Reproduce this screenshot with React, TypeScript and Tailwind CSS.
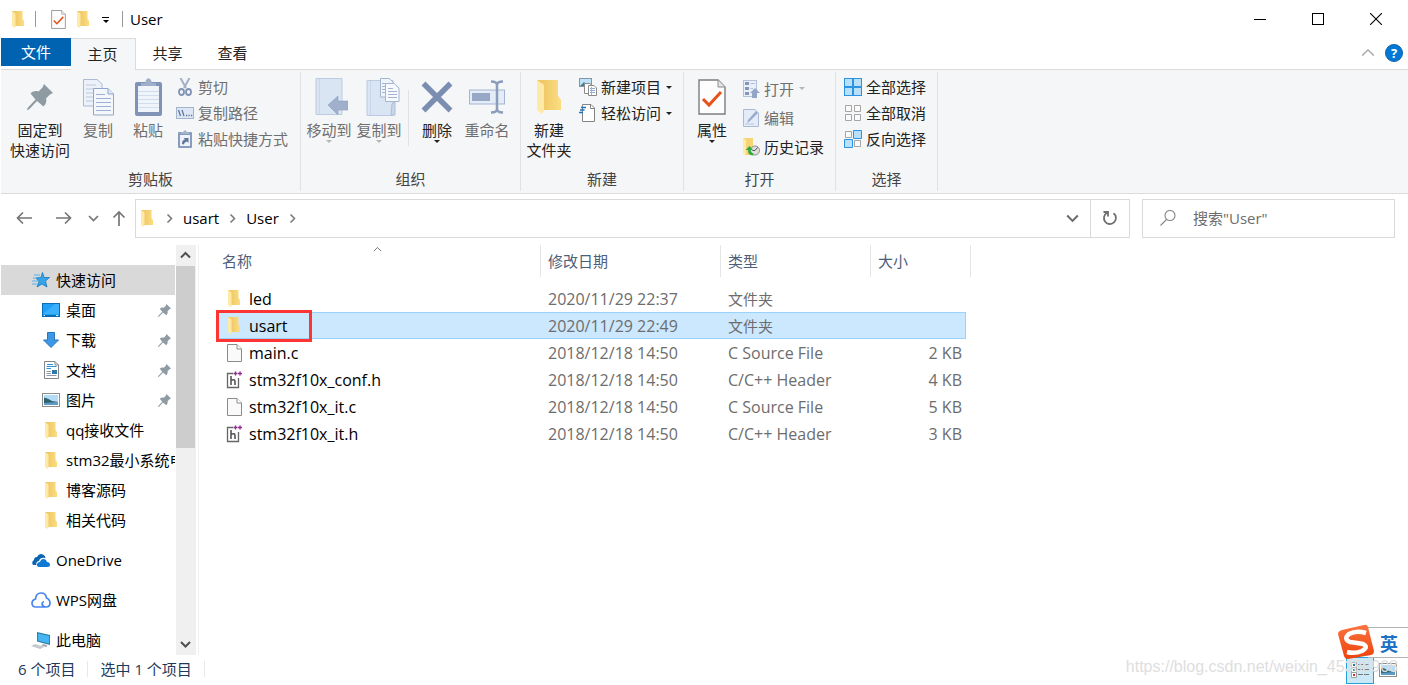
import { useState } from 'react';
import type { ReactNode } from 'react';

/* ---------- icons ---------- */

function FolderIcon({ className = 'w-3 h-[17px]' }: { className?: string }) {
  return (
    <svg viewBox="0 0 24 34" preserveAspectRatio="none" className={className}>
      <defs>
        <linearGradient id="folder-back" x1="0" x2="1" y1="0" y2="0">
          <stop offset="0.2" stopColor="#efc766" />
          <stop offset="1" stopColor="#fbdd80" />
        </linearGradient>
      </defs>
      <path d="M0 0H21V16L24 20V30H6L0 24Z" fill="url(#folder-back)" />
      <path d="M0 0L7 5V31L5 34L0 30Z" fill="#ffe9a6" />
    </svg>
  );
}

function CheckDocIcon({ className }: { className: string }) {
  return (
    <svg viewBox="0 0 28 36" className={className}>
      <path d="M1 1H20L27 8V35H1Z" fill="#fdfdfd" stroke="#7d7d7d" strokeWidth="1.4" />
      <path d="M20 1V8H27" fill="#e6e6e6" stroke="#8b8b8b" />
      <path d="M5 20L11 26L23 13" fill="none" stroke="#e8511a" strokeWidth="3" />
    </svg>
  );
}

function PinIcon({ className }: { className: string }) {
  return (
    <svg viewBox="0 0 26 26" className={className}>
      <path
        d="M17 0L26 9L23 10.5L19 14.5C20 17 19 20 16.5 22.500L10 17L2 25.500L0 26L.5 24L8.500 15.500L3.500 9.500C6 7 9 6.500 11.500 7.500L15.500 3.500Z"
        fill="#8f9ba3"
      />
    </svg>
  );
}

function CopyIcon() {
  return (
    <svg viewBox="0 0 31 37" className="w-[31px] h-[37px]">
      <path d="M.5 .5H14L19 5V27H.5Z" fill="#edf2fa" stroke="#a9bbd5" />
      <path d="M3 6H13M3 10H16M3 14H10M3 18H10M3 22H10" stroke="#b9c8de" />
      <path d="M10.500 9.500H25L30.500 15V36H10.500Z" fill="#f3f7fc" stroke="#91a6c6" />
      <path d="M25 9.500V15H30.500" fill="#dfe8f4" stroke="#91a6c6" />
      <path d="M13 15.500H22M13 19.500H28M13 23.500H28M13 27.500H28M13 31.500H28" stroke="#9fb1ce" />
    </svg>
  );
}

function PasteIcon() {
  return (
    <svg viewBox="0 0 27 38" className="w-[27px] h-[38px]">
      <rect x="0" y="4" width="27" height="34" rx="2" fill="#8093b6" />
      <rect x="3" y="8" width="21" height="26" fill="#eff4fb" />
      <path d="M3 13.500H24M3 17.500H24M3 21.500H24M3 25.500H24M3 29.500H24" stroke="#d3deed" />
      <path d="M6 5H10L11 2Q13.500 -1.500 16 2L17 5H21V8H6Z" fill="#a0afc9" />
    </svg>
  );
}

function ScissorsIcon() {
  return (
    <svg viewBox="0 0 14 18" className="w-[14px] h-[18px]" fill="none">
      <path d="M2.500 0L8 10M11.500 0L6 10" stroke="#a2b0c8" strokeWidth="2" />
      <ellipse cx="3.500" cy="14" rx="2.500" ry="3" stroke="#8093b6" strokeWidth="1.800" />
      <ellipse cx="10.500" cy="14" rx="2.500" ry="3" stroke="#8093b6" strokeWidth="1.800" />
    </svg>
  );
}

function PathIcon() {
  return (
    <svg viewBox="0 0 18 12" className="w-[18px] h-3">
      <rect x=".5" y=".5" width="17" height="11" fill="#dde6f4" stroke="#a3b4ce" />
      <path d="M2.500 3L4.500 9M6 3L8 9" stroke="#5c6f96" strokeWidth="1.200" />
      <path d="M10 8.500H11.200M12.500 8.500H13.700M15 8.500H16.200" stroke="#5c6f96" strokeWidth="1.500" />
    </svg>
  );
}

function PasteShortcutIcon() {
  return (
    <svg viewBox="0 0 14 18" className="w-[14px] h-[18px]">
      <rect x="0" y="2" width="14" height="16" rx="1" fill="#8a9cbd" />
      <rect x="2" y="5" width="10" height="11" fill="#eef3fb" />
      <path d="M3 2H5L7 0L9 2H11V4H3Z" fill="#a5b3cc" />
      <path d="M4 14C4 11 5 10 7 9.500L5.500 8H10.500V13L9 11.500C7 12 6 13 6 14.500Z" fill="#62769d" />
    </svg>
  );
}

function MoveToIcon() {
  return (
    <svg viewBox="-5 0 38 38" className="w-[38px] h-[38px]">
      <path d="M1 .5H27V36.500H1Z" fill="#dae5f4" stroke="#bccbe2" />
      <path d="M4.500 1V36" stroke="#c9d6e9" />
      <path d="M13 27L23 18V23H33V32H23V37Z" fill="#a0b0cb" stroke="#8fa1c0" strokeWidth=".6" />
    </svg>
  );
}

function CopyToIcon() {
  return (
    <svg viewBox="-7 0 41 38" className="w-[41px] h-[38px]">
      <path d="M1 2.500H27V37.500H1Z" fill="#dae5f4" stroke="#bccbe2" />
      <path d="M4.500 3V37" stroke="#c9d6e9" />
      <path d="M26 26L29 24V37H25Z" fill="#c9d7eb" stroke="#adbdd6" />
      <path d="M14.500 .5H23L27 4V19H14.500Z" fill="#f0f5fb" stroke="#a4b5d0" />
      <path d="M19.500 5.500H28L33 10V23.500H19.500Z" fill="#f6f9fd" stroke="#a4b5d0" />
      <path d="M16 5.500H19M16 8.500H19M16 11.500H19M16 14.500H19M22 10.500H27M22 13.500H31M22 16.500H31M22 19.500H31" stroke="#a4b5d0" />
    </svg>
  );
}

function DeleteIcon() {
  return (
    <svg viewBox="0 0 32 32" className="w-8 h-8">
      <path d="M2.500 2.500L29.500 29.500M29.500 2.500L2.500 29.500" stroke="#7b8db0" strokeWidth="5.500" />
    </svg>
  );
}

function RenameIcon() {
  return (
    <svg viewBox="0 0 36 34" className="w-9 h-[34px]">
      <rect x=".5" y="10" width="35" height="14" fill="#e4ecf8" stroke="#a3b5d2" />
      <rect x="3" y="13" width="18" height="8" fill="#97a8c7" />
      <path d="M22 1.500Q28 1.500 28 5Q28 1.500 34 1.500M28 4V30M22 32.500Q28 32.500 28 29Q28 32.500 34 32.500" fill="none" stroke="#8b9dbd" strokeWidth="2.500" />
    </svg>
  );
}

function NewItemIcon() {
  return (
    <svg viewBox="0 0 18 18" className="w-[18px] h-[18px]">
      <rect x=".5" y=".5" width="12" height="8" fill="#bfe2f7" stroke="#7f98a8" />
      <path d="M1 8L5 4L8 7L10 5L12 8Z" fill="#3f8097" />
      <path d="M5.500 5.500H11L13 8V15.500H5.500Z" fill="#fff" stroke="#8b8b8b" />
      <path d="M9.500 7.500H15L17.500 10V17.500H9.500Z" fill="#fff" stroke="#8b8b8b" />
      <path d="M11 10.500H16M11 12.500H16M11 14.500H16" stroke="#91a9d0" />
      <path d="M12.500 9V17" stroke="#e39a9a" />
    </svg>
  );
}

function EasyAccessIcon() {
  return (
    <svg viewBox="0 0 18 18" className="w-[18px] h-[18px]">
      <path d="M3.500 .5H12L15.500 4V17.500H3.500Z" fill="#fff" stroke="#848484" />
      <path d="M11.500 .5V4.500H15.500" fill="none" stroke="#848484" />
      <path d="M2 3.500H7M1 6H5.500M0 8.500H4" stroke="#2273b8" strokeWidth="1.400" />
    </svg>
  );
}

function OpenIcon() {
  return (
    <svg viewBox="0 0 17 18" className="w-[17px] h-[18px]">
      <rect x=".5" y=".5" width="13" height="16" fill="#eaf0f9" stroke="#b3c2da" />
      <path d="M2 2H6V5H2ZM2 7H6V10H2ZM2 12H6V15H2Z" fill="#8395b8" />
      <path d="M7.500 3.500H12M7.500 8.500H10" stroke="#b3c2da" />
      <path d="M12 8L17 13H14V18H9V13H7Z" fill="#94a6c6" />
    </svg>
  );
}

function EditIcon() {
  return (
    <svg viewBox="0 0 16 18" className="w-4 h-[18px]">
      <path d="M.5 .5H12L15.500 4V17.500H.5Z" fill="#e3ecf8" stroke="#a9bad4" />
      <path d="M4 14L5 11L13 2L15 4L7 12Z" fill="#9bacca" />
      <path d="M2 15H11" stroke="#b8c8de" />
    </svg>
  );
}

function HistoryIcon() {
  return (
    <svg viewBox="0 0 18 18" className="w-[18px] h-[18px]">
      <path d="M1 0H11V17H4L1 15Z" fill="#f7d474" />
      <path d="M1 0L4 2V18L1 16Z" fill="#ffeaaa" />
      <circle cx="13" cy="12.500" r="4.500" fill="#dedede" stroke="#8d8d8d" />
      <path d="M13 12.500L15.500 9.500M13 12.500H10.500" stroke="#555" />
      <path d="M11 17.500Q5.500 17 6 12H3.500L7.500 8L11 12H8.500Q8.500 14.500 11.500 15.500Z" fill="#2eaa3f" />
    </svg>
  );
}

function SelectIcon({ cells }: { cells: 'all' | 'none' | 'invert' }) {
  if (cells === 'all') {
    return (
      <svg viewBox="0 0 18 18" className="w-[18px] h-[18px]">
        <rect width="18" height="18" fill="#2c93e3" />
        <path d="M1 1H8V8H1ZM10 1H17V8H10ZM1 10H8V17H1ZM10 10H17V17H10Z" fill="#b9e0fb" />
      </svg>
    );
  }
  return (
    <svg viewBox="0 0 18 18" className="w-[18px] h-[18px]">
      <path d="M1.500 1.500H7.500V7.500H1.500ZM10.500 1.500H16.500V7.500H10.500ZM1.500 10.500H7.500V16.500H1.500ZM10.500 10.500H16.500V16.500H10.500Z" fill="#fafafa" stroke="#a5a5a5" />
      {cells === 'invert' && (
        <path d="M9.500 .5H17.500V8.500H9.500ZM.5 9.500H8.500V17.500H.5Z" fill="#b9e0fb" stroke="#2c93e3" />
      )}
    </svg>
  );
}

type Direction = 'up' | 'down' | 'right';

const CHEVRONS: Record<Direction, string> = {
  up: 'M1 7.500L5.500 3L10 7.500',
  down: 'M1 3L5.500 7.500L10 3',
  right: 'M3.500 1.500L7.500 5.500L3.500 9.500',
};

function Chevron({ dir, className = 'w-[11px] h-[11px] text-[#767676]', width = 2 }: { dir: Direction; className?: string; width?: number }) {
  return (
    <svg viewBox="0 0 11 11" className={className} fill="none" stroke="currentColor" strokeWidth={width}>
      <path d={CHEVRONS[dir]} />
    </svg>
  );
}

function Caret({ className = 'text-[#222]' }: { className?: string }) {
  return (
    <svg viewBox="0 0 6 3" className={`w-1.5 h-[3px] ${className}`}>
      <path d="M0 0H6L3 3Z" fill="currentColor" />
    </svg>
  );
}

function ArrowIcon({ kind }: { kind: 'back' | 'forward' | 'up' }) {
  const paths = {
    back: 'M16 8H1.500M7 2.500L1.500 8L7 13.500',
    forward: 'M0 8H14.500M9 2.500L14.500 8L9 13.500',
    up: 'M8 16V2M2.500 7.500L8 2L13.500 7.500',
  };
  return (
    <svg viewBox="0 0 16 16" className="w-4 h-4" fill="none" stroke="#767676" strokeWidth="1.700">
      <path d={paths[kind]} />
    </svg>
  );
}

function StarIcon() {
  return (
    <svg viewBox="0 0 18 16" className="w-[18px] h-4">
      <path d="M10.500 .5L12 5.500H17.500L13.500 9L15 15L10 12L5 15L7 9.500L4 6L9 5.500Z" fill="#35a5e8" stroke="#1777bd" strokeWidth=".8" />
      <path d="M2 3H8M1 6H5M0 9H6M0 12H5" stroke="#56b0ea" />
    </svg>
  );
}

function DesktopIcon() {
  return (
    <svg viewBox="0 0 18 14" className="w-[18px] h-[14px]">
      <rect x=".5" y=".5" width="17" height="13" fill="#1fa0f7" stroke="#0c6db4" />
      <path d="M1 11L13 1H17V11Z" fill="#3bb0fb" />
      <path d="M2 12.500H16" stroke="#0c6db4" />
      <path d="M2 12.500H3M14 12.500H16" stroke="#d6eefd" />
    </svg>
  );
}

function DownloadIcon() {
  return (
    <svg viewBox="0 0 16 16" className="w-4 h-4">
      <path d="M4.500 .5H11.500V8H15.500L8 15.500L.5 8H4.500Z" fill="#3c98e4" stroke="#2877be" />
    </svg>
  );
}

function DocumentIcon() {
  return (
    <svg viewBox="0 0 15 18" className="w-[15px] h-[18px]">
      <path d="M.5 .5H11L14.500 4V17.500H.5Z" fill="#fff" stroke="#858585" />
      <path d="M3 3.500H9M2.500 5.500H12.500M2.500 7.500H7" stroke="#2b93d8" />
      <path d="M2.500 10.500H7M2.500 12.500H7M2.500 14.500H12.500" stroke="#8f9ba8" />
      <rect x="8" y="9" width="5" height="4" fill="#2f79a8" />
      <path d="M11 .5V4H14.500" fill="none" stroke="#858585" />
    </svg>
  );
}

function PictureIcon() {
  return (
    <svg viewBox="0 0 18 14" className="w-[18px] h-[14px]">
      <rect x=".5" y=".5" width="17" height="13" fill="#fff" stroke="#8d8d8d" />
      <rect x="2" y="2" width="14" height="10" fill="#b3dcf8" />
      <path d="M2 4.500Q6 5 10 8L16 9V12H2Z" fill="#2f6270" />
      <path d="M2 10L16 9V12H2Z" fill="#5f9bc8" />
    </svg>
  );
}

function OneDriveIcon() {
  return (
    <svg viewBox="0 0 18 13" className="w-[18px] h-[13px]">
      <path d="M1 11Q-1 8 2 6Q2 3 5 3Q7 -1 11 .5Q13.500 1.500 13.500 4Q8 3 7 7Q3.500 7.500 4.500 11Z" fill="#0a64b4" />
      <path d="M7 13Q4.500 12.500 5 10Q5.500 8 8 8Q9 4.500 12 5Q14.500 5.500 15 8Q18 8.500 18 10.500Q18 13 15.500 13Z" fill="#0f7ad6" />
    </svg>
  );
}

function WpsCloudIcon() {
  return (
    <svg viewBox="0 0 20 16" className="w-5 h-4" fill="none" stroke="#4a86f0" strokeWidth="1.700">
      <path d="M13 15H5Q1 15 1 11Q1 8 4.500 7Q5 1 10 1Q15 1 15.500 6Q19 7.500 19 11Q19 15 15 15Q11.500 15 11 12Q11 10 13 9.500" />
    </svg>
  );
}

function ComputerIcon() {
  return (
    <svg viewBox="0 0 20 17" className="w-5 h-[17px]">
      <path d="M6 0L19 3V13L6 9.500Z" fill="#2d7fae" />
      <path d="M7 1.500L18 4V11.500L7 8.500Z" fill="#46b6f2" />
      <path d="M12 12L16 13V15L10 14Z" fill="#a5adb3" />
      <path d="M0 14L4 12L13 15L9 17Z" fill="#c3c9cd" />
    </svg>
  );
}

function CFileIcon() {
  return (
    <svg viewBox="0 0 15 18" className="w-[15px] h-[18px]">
      <path d="M.5 .5H10L14.500 5V17.500H.5Z" fill="#fafafa" stroke="#8c8c8c" />
      <path d="M10 .5V5H14.500" fill="#fff" stroke="#8c8c8c" />
    </svg>
  );
}

function HeaderFileIcon() {
  return (
    <svg viewBox="0 0 16 18" className="w-4 h-[18px]" fill="none">
      <path d="M7 2.500H1.500V16.500H12.500V7" stroke="#666" strokeWidth="1.300" />
      <path d="M5 5V14M5 9.500Q9 7.500 9 10.500V14" stroke="#555" strokeWidth="1.600" />
      <path d="M7.500 2.500H11.500M9.500 .5V4.500M12 2.500H16M14 .5V4.500" stroke="#92278f" strokeWidth="1.300" />
    </svg>
  );
}

/* ---------- ribbon ---------- */

interface RibbonButtonProps {
  icon: ReactNode;
  label: string;
  disabled?: boolean;
  dropdown?: boolean;
}

function BigButton({ icon, label, disabled, dropdown, className = 'w-[50px]' }: RibbonButtonProps & { className?: string }) {
  return (
    <button
      type="button"
      disabled={disabled}
      className={`flex shrink-0 flex-col items-center text-[#222] disabled:text-[#6f6f6f] ${className}`}
    >
      <span className="flex h-[46px] items-center">{icon}</span>
      <span className="whitespace-pre text-center leading-5">{label}</span>
      {dropdown && <Caret className={disabled ? 'text-[#b5b5b5]' : 'text-[#222]'} />}
    </button>
  );
}

function SmallButton({ icon, label, disabled, dropdown, className = 'h-[26px]' }: RibbonButtonProps & { className?: string }) {
  return (
    <button
      type="button"
      disabled={disabled}
      className={`flex items-center whitespace-nowrap text-[#222] disabled:text-[#6f6f6f] ${className}`}
    >
      <span className="mr-1 flex w-[18px] justify-center">{icon}</span>
      {label}
      {dropdown && (
        <span className="ml-[5px]">
          <Caret className={disabled ? 'text-[#b5b5b5]' : 'text-[#222]'} />
        </span>
      )}
    </button>
  );
}

function RibbonGroup({ title, className, children }: { title: string; className: string; children: ReactNode }) {
  return (
    <section aria-label={title} className={`my-0.5 flex shrink-0 flex-col border-r border-[#e0e2e4] pt-0.5 ${className}`}>
      <div className="flex h-[94px] items-start pl-[3px]">{children}</div>
      <div className="text-center leading-6 text-[#444]">{title}</div>
    </section>
  );
}

function Ribbon() {
  return (
    <div className="flex h-[124px] border-b border-[#dadbdc] bg-[#f5f6f7]">
      <RibbonGroup title="剪贴板" className="w-[300px]">
        <BigButton icon={<PinIcon className="w-[26px] h-[26px]" />} label={'固定到\n快速访问'} className="w-[72px]" />
        <BigButton icon={<CopyIcon />} label="复制" disabled className="w-[44px]" />
        <BigButton icon={<PasteIcon />} label="粘贴" disabled className="w-[56px]" />
        <div className="flex flex-col">
          <SmallButton icon={<ScissorsIcon />} label="剪切" disabled />
          <SmallButton icon={<PathIcon />} label="复制路径" disabled />
          <SmallButton icon={<PasteShortcutIcon />} label="粘贴快捷方式" disabled />
        </div>
      </RibbonGroup>

      <RibbonGroup title="组织" className="w-[220px]">
        <BigButton icon={<MoveToIcon />} label="移动到" disabled dropdown />
        <BigButton icon={<CopyToIcon />} label="复制到" disabled dropdown />
        <div className="ml-1 mr-[3px] mt-4 h-14 border-r border-[#e0e2e4]" />
        <BigButton icon={<DeleteIcon />} label="删除" dropdown />
        <BigButton icon={<RenameIcon />} label="重命名" disabled />
      </RibbonGroup>

      <RibbonGroup title="新建" className="w-[163px]">
        <BigButton icon={<FolderIcon className="w-6 h-[34px]" />} label={'新建\n文件夹'} />
        <div className="ml-[5px] flex flex-col">
          <SmallButton icon={<NewItemIcon />} label="新建项目" dropdown />
          <SmallButton icon={<EasyAccessIcon />} label="轻松访问" dropdown />
        </div>
      </RibbonGroup>

      <RibbonGroup title="打开" className="w-[152px]">
        <BigButton icon={<CheckDocIcon className="w-7 h-9" />} label="属性" dropdown />
        <div className="ml-[5px] flex flex-col">
          <SmallButton icon={<OpenIcon />} label="打开" disabled dropdown className="h-[29px]" />
          <SmallButton icon={<EditIcon />} label="编辑" disabled className="h-[29px]" />
          <SmallButton icon={<HistoryIcon />} label="历史记录" className="h-[29px]" />
        </div>
      </RibbonGroup>

      <RibbonGroup title="选择" className="w-[102px]">
        <div className="ml-[5px] flex flex-col">
          <SmallButton icon={<SelectIcon cells="all" />} label="全部选择" />
          <SmallButton icon={<SelectIcon cells="none" />} label="全部取消" />
          <SmallButton icon={<SelectIcon cells="invert" />} label="反向选择" />
        </div>
      </RibbonGroup>
    </div>
  );
}

/* ---------- window chrome ---------- */

function TitleBar() {
  return (
    <header className="flex h-[38px] items-center">
      <div className="flex flex-1 items-center pl-[11px]">
        <FolderIcon />
        <span className="ml-[11px] h-4 border-l border-[#999]" />
        <button type="button" aria-label="属性" className="ml-[15px]">
          <CheckDocIcon className="w-[15px] h-[19px]" />
        </button>
        <button type="button" aria-label="新建文件夹" className="ml-[11px]">
          <FolderIcon />
        </button>
        <button type="button" aria-label="自定义快速访问工具栏" className="ml-[13px] flex flex-col items-center gap-0.5 pt-0.5">
          <span className="w-[7px] border-t border-black" />
          <Caret className="text-black" />
        </button>
        <span className="ml-[13px] mr-[7px] h-4 border-l border-[#999]" />
        <h1 className="text-black">User</h1>
      </div>
      <div className="flex pr-[3px]">
        <button type="button" aria-label="最小化" className="flex h-[38px] w-[58px] items-center justify-center">
          <span className="w-3 border-t border-black" />
        </button>
        <button type="button" aria-label="最大化" className="flex h-[38px] w-[58px] items-center justify-center">
          <span className="h-3 w-3 border border-black" />
        </button>
        <button type="button" aria-label="关闭" className="flex h-[38px] w-[58px] items-center justify-center">
          <svg viewBox="0 0 12 12" className="w-3 h-3" stroke="#000" strokeWidth="1.100">
            <path d="M0 0L12 12M12 0L0 12" />
          </svg>
        </button>
      </div>
    </header>
  );
}

function TabBar() {
  const tabs = ['主页', '共享', '查看'];
  const [active, setActive] = useState('主页');

  return (
    <nav className="flex h-8 items-start border-b border-[#dadbdc]">
      <button type="button" className="h-7 w-[70px] bg-[#0063b1] text-white">
        文件
      </button>
      {tabs.map((tab) => (
        <button
          key={tab}
          type="button"
          onClick={() => setActive(tab)}
          className={`w-[65px] border-r border-t pr-px pb-0.5 text-[#222] ${
            tab === active ? 'h-8 border-[#dadbdc] bg-[#f5f6f7]' : 'h-[31px] border-transparent'
          }`}
        >
          {tab}
        </button>
      ))}
      <div className="ml-auto flex h-[30px] items-center gap-2.5 pr-[5px]">
        <button type="button" aria-label="最小化功能区">
          <Chevron dir="up" className="w-[14px] h-[14px] text-[#a0a0a0]" width={1} />
        </button>
        <button
          type="button"
          aria-label="帮助"
          className="h-[18px] w-[18px] rounded-full border border-[#1561a5] bg-[#0078d7] text-[13px] font-bold leading-4 text-white"
        >
          ?
        </button>
      </div>
    </nav>
  );
}

function AddressRow() {
  return (
    <div className="flex h-[51px] items-center pr-[13px] pb-[3px]">
      <div className="flex w-[134px] shrink-0 items-center pl-[15px]">
        <button type="button" aria-label="后退"><ArrowIcon kind="back" /></button>
        <button type="button" aria-label="前进" className="ml-6"><ArrowIcon kind="forward" /></button>
        <button type="button" aria-label="最近浏览的位置" className="ml-4">
          <Chevron dir="down" className="w-[11px] h-[11px] text-[#767676]" width={1.7} />
        </button>
        <button type="button" aria-label="上移" className="ml-3"><ArrowIcon kind="up" /></button>
      </div>
      <div className="flex h-[39px] flex-1 border border-[#d9d9d9]">
        <div className="flex flex-1 items-center pl-[5px] text-black">
          <FolderIcon />
          <span className="ml-[11px]"><Chevron dir="right" width={1.5} /></span>
          <a href="#usart" className="ml-2">usart</a>
          <span className="ml-2"><Chevron dir="right" width={1.5} /></span>
          <a href="#User" className="ml-2">User</a>
          <span className="ml-2"><Chevron dir="right" width={1.5} /></span>
        </div>
        <button type="button" aria-label="以前的位置" className="flex w-9 items-center justify-center">
          <Chevron dir="down" className="w-[13px] h-[13px] text-[#6a6a6a]" width={1.7} />
        </button>
        <button type="button" aria-label="刷新" className="flex w-[39px] items-center justify-center border-l border-[#d9d9d9]">
          <svg viewBox="0 0 16 16" className="w-4 h-4" fill="none" stroke="#6f6f6f" strokeWidth="1.800">
            <path d="M11.500 3.200A6 6 0 1 1 5 2.800M1.500 2H6V6.500" />
          </svg>
        </button>
      </div>
      <label className="ml-3 flex h-[39px] w-[253px] items-center border border-[#d9d9d9] pl-[17px]">
        <svg viewBox="0 0 16 16" className="w-4 h-4 shrink-0" fill="none" stroke="#858585" strokeWidth="1.100">
          <circle cx="10" cy="5.500" r="5" />
          <path d="M6.500 9.500L.5 15.500" />
        </svg>
        <input
          type="text"
          aria-label="搜索"
          placeholder={'搜索"User"'}
          className="ml-[17px] w-full min-w-0 outline-none placeholder:text-[#6d6d6d]"
        />
      </label>
    </div>
  );
}

/* ---------- navigation pane ---------- */

interface NavItem {
  label: string;
  icon: ReactNode;
  pinned?: boolean;
}

const QUICK_ACCESS: NavItem[] = [
  { label: '桌面', icon: <DesktopIcon />, pinned: true },
  { label: '下载', icon: <DownloadIcon />, pinned: true },
  { label: '文档', icon: <DocumentIcon />, pinned: true },
  { label: '图片', icon: <PictureIcon />, pinned: true },
  { label: 'qq接收文件', icon: <FolderIcon /> },
  { label: 'stm32最小系统电', icon: <FolderIcon /> },
  { label: '博客源码', icon: <FolderIcon /> },
  { label: '相关代码', icon: <FolderIcon /> },
];

const ROOTS: NavItem[] = [
  { label: 'OneDrive', icon: <OneDriveIcon /> },
  { label: 'WPS网盘', icon: <WpsCloudIcon /> },
  { label: '此电脑', icon: <ComputerIcon /> },
];

function NavPane() {
  return (
    <aside className="flex w-[198px] shrink-0 border-r border-[#f0f0f0] text-black">
      <div className="w-[174px] overflow-hidden pt-5">
        <a href="#quick" className="flex h-[30px] items-center bg-[#d9d9d9] pl-[30px]">
          <span className="mr-[5px] flex w-5 justify-center"><StarIcon /></span>
          快速访问
        </a>
        <ul>
          {QUICK_ACCESS.map((item) => (
            <li key={item.label}>
              <a href={`#${item.label}`} className="flex h-[30px] items-center whitespace-nowrap pl-10">
                <span className="mr-[5px] flex w-5 shrink-0 justify-center">{item.icon}</span>
                {item.label}
                {item.pinned && (
                  <span className="ml-auto pr-1"><PinIcon className="w-[13px] h-[13px]" /></span>
                )}
              </a>
            </li>
          ))}
        </ul>
        <ul>
          {ROOTS.map((item) => (
            <li key={item.label} className="pt-2.5">
              <a href={`#${item.label}`} className="flex h-[30px] items-center pl-[30px]">
                <span className="mr-[5px] flex w-5 justify-center">{item.icon}</span>
                {item.label}
              </a>
            </li>
          ))}
        </ul>
      </div>
      <div className="ml-px flex w-5 flex-col bg-[#f0f0f0]">
        <button type="button" aria-label="向上滚动" className="flex h-[21px] items-center justify-center pr-px">
          <Chevron dir="up" className="w-[11px] h-[11px] text-[#505050]" />
        </button>
        <div className="mr-px h-[182px] bg-[#cdcdcd]" />
        <button type="button" aria-label="向下滚动" className="mt-auto flex h-[21px] items-center justify-center pr-px">
          <Chevron dir="down" className="w-[11px] h-[11px] text-[#505050]" />
        </button>
      </div>
    </aside>
  );
}

/* ---------- file list ---------- */

interface FileEntry {
  name: string;
  modified: string;
  type: string;
  size: string;
  kind: 'folder' | 'c' | 'h';
}

const FILES: FileEntry[] = [
  { name: 'led', modified: '2020/11/29 22:37', type: '文件夹', size: '', kind: 'folder' },
  { name: 'usart', modified: '2020/11/29 22:49', type: '文件夹', size: '', kind: 'folder' },
  { name: 'main.c', modified: '2018/12/18 14:50', type: 'C Source File', size: '2 KB', kind: 'c' },
  { name: 'stm32f10x_conf.h', modified: '2018/12/18 14:50', type: 'C/C++ Header', size: '4 KB', kind: 'h' },
  { name: 'stm32f10x_it.c', modified: '2018/12/18 14:50', type: 'C Source File', size: '5 KB', kind: 'c' },
  { name: 'stm32f10x_it.h', modified: '2018/12/18 14:50', type: 'C/C++ Header', size: '3 KB', kind: 'h' },
];

function FileIcon({ kind }: { kind: FileEntry['kind'] }) {
  if (kind === 'folder') return <FolderIcon />;
  if (kind === 'c') return <CFileIcon />;
  return <HeaderFileIcon />;
}

function FileTable() {
  const [selected, setSelected] = useState('usart');
  const th = 'h-8 border-r border-[#e5e5e5] pl-[7px] text-left font-normal text-[#4c607a]';

  return (
    <table className="w-[754px] table-fixed border-separate border-spacing-0">
      <colgroup>
        <col className="w-[324px]" />
        <col className="w-[180px]" />
        <col className="w-[150px]" />
        <col className="w-[95px]" />
        <col className="w-[5px]" />
      </colgroup>
      <thead>
        <tr>
          <th className="relative h-8 border-r border-[#e5e5e5] pl-[5px] text-left font-normal text-[#4c607a]">
            名称
            <span className="absolute left-[155px] top-0">
              <Chevron dir="up" className="w-[11px] h-[9px] text-[#555]" width={1} />
            </span>
          </th>
          <th className={th}>修改日期</th>
          <th className={th}>类型</th>
          <th colSpan={2} className={th}>大小</th>
        </tr>
      </thead>
      <tbody>
        <tr aria-hidden="true"><td colSpan={5} className="h-2 p-0" /></tr>
        {FILES.map((file) => {
          const isSelected = file.name === selected;
          const cell = `h-[27px] border-y p-0 ${isSelected ? 'border-[#99d1ff] bg-[#cce8ff]' : 'border-transparent'}`;
          const typeSize = file.kind === 'folder' ? '' : 'text-base leading-5';

          return (
            <tr key={file.name} onClick={() => setSelected(file.name)} className="text-[#6d6d6d]">
              <td className={`relative ${cell}`}>
                <div className="flex items-center pl-2 text-base leading-5 text-black">
                  <span className="mr-1.5 flex w-[18px] justify-center"><FileIcon kind={file.kind} /></span>
                  {file.name}
                </div>
                {file.name === 'usart' && (
                  <span className="pointer-events-none absolute -left-px -top-[3px] h-8 w-24 border-3 border-[#fd3634]" />
                )}
              </td>
              <td className={cell}><div className="pl-[7px] text-base leading-5">{file.modified}</div></td>
              <td className={cell}><div className={`pl-[7px] ${typeSize}`}>{file.type}</div></td>
              <td className={`${cell} ${isSelected ? 'border-r' : ''}`}>
                <div className="pr-1 text-right text-base leading-5">{file.size}</div>
              </td>
              <td className="p-0" />
            </tr>
          );
        })}
      </tbody>
    </table>
  );
}

/* ---------- bottom ---------- */

function StatusBar() {
  return (
    <footer className="flex h-[30px] items-center text-[#1e395b]">
      <div className="flex items-center pb-0.5 pl-[17px]">
        <span>6 个项目</span>
        <span className="mx-3 h-4 border-l border-[#e8e8e8]" />
        <span>选中 1 个项目</span>
        <span className="mx-3 h-4 border-l border-[#e8e8e8]" />
      </div>
      <div className="ml-auto flex items-center gap-[5px] pr-[11px]">
        <button type="button" aria-label="详细信息" className="flex h-[27px] w-7 items-center justify-center border border-[#26a0da] bg-[#cbe8f6]">
          <svg viewBox="0 0 18 16" className="w-[18px] h-4">
            <path d="M.5 .5H5.500V5.500H.5ZM.5 5.500H5.500V10.500H.5ZM.5 10.500H5.500V15.500H.5Z" fill="#fff" stroke="#a0a0a0" />
            <path d="M2 3H4" stroke="#2b6f8a" strokeWidth="2" />
            <path d="M2 8H4" stroke="#5b9a5b" strokeWidth="2" />
            <path d="M2 13H4" stroke="#c33" strokeWidth="2" />
            <path d="M7 2.500H12M13 2.500H18M7 7.500H12M13 7.500H18M7 12.500H12M13 12.500H18" stroke="#777" />
          </svg>
        </button>
        <button type="button" aria-label="大缩略图">
          <PictureIcon />
        </button>
      </div>
    </footer>
  );
}

function ImeBar() {
  return (
    <div className="absolute bottom-[27px] right-0 flex h-[31px] w-10 items-center border-y border-[#b4b4b4] bg-white">
      <svg viewBox="0 0 36 36" className="absolute -left-[30px] -top-1 w-9 h-9">
        <defs>
          <linearGradient id="ime-logo" x1="0" x2="0" y1="0" y2="1">
            <stop offset="0" stopColor="#fa7440" />
            <stop offset="1" stopColor="#ee420b" />
          </linearGradient>
        </defs>
        <path d="M4 6L26 1Q29 0 30 3L36 27Q36 30 33 31L10 35Q7 35 6 32L0 10Q0 7 4 6Z" fill="url(#ime-logo)" />
        <path d="M28 9Q18 6 11 10Q5 15 12 18Q20 19 25 20Q31 23 24 27Q17 30 9 28" fill="none" stroke="#fff" strokeWidth="4.500" />
      </svg>
      <span className="ml-3 pt-0.5 text-[18px] font-bold text-[#1d71c7]">英</span>
    </div>
  );
}

export default function App() {
  return (
    <div className="relative flex min-h-screen flex-col overflow-hidden bg-white pl-px font-['Open_Sans','Noto_Sans_CJK_SC',sans-serif] text-[15px] leading-5">
      <TitleBar />
      <TabBar />
      <Ribbon />
      <AddressRow />
      <div className="flex flex-1">
        <NavPane />
        <main className="min-w-0 flex-1 pl-[18px]">
          <FileTable />
        </main>
      </div>
      <StatusBar />
      <ImeBar />
      <div className="pointer-events-none absolute bottom-1.5 right-2.5 font-['Liberation_Sans',sans-serif] text-base text-[#dedede]">
        https://blog.csdn.net/weixin_45388908
      </div>
    </div>
  );
}
